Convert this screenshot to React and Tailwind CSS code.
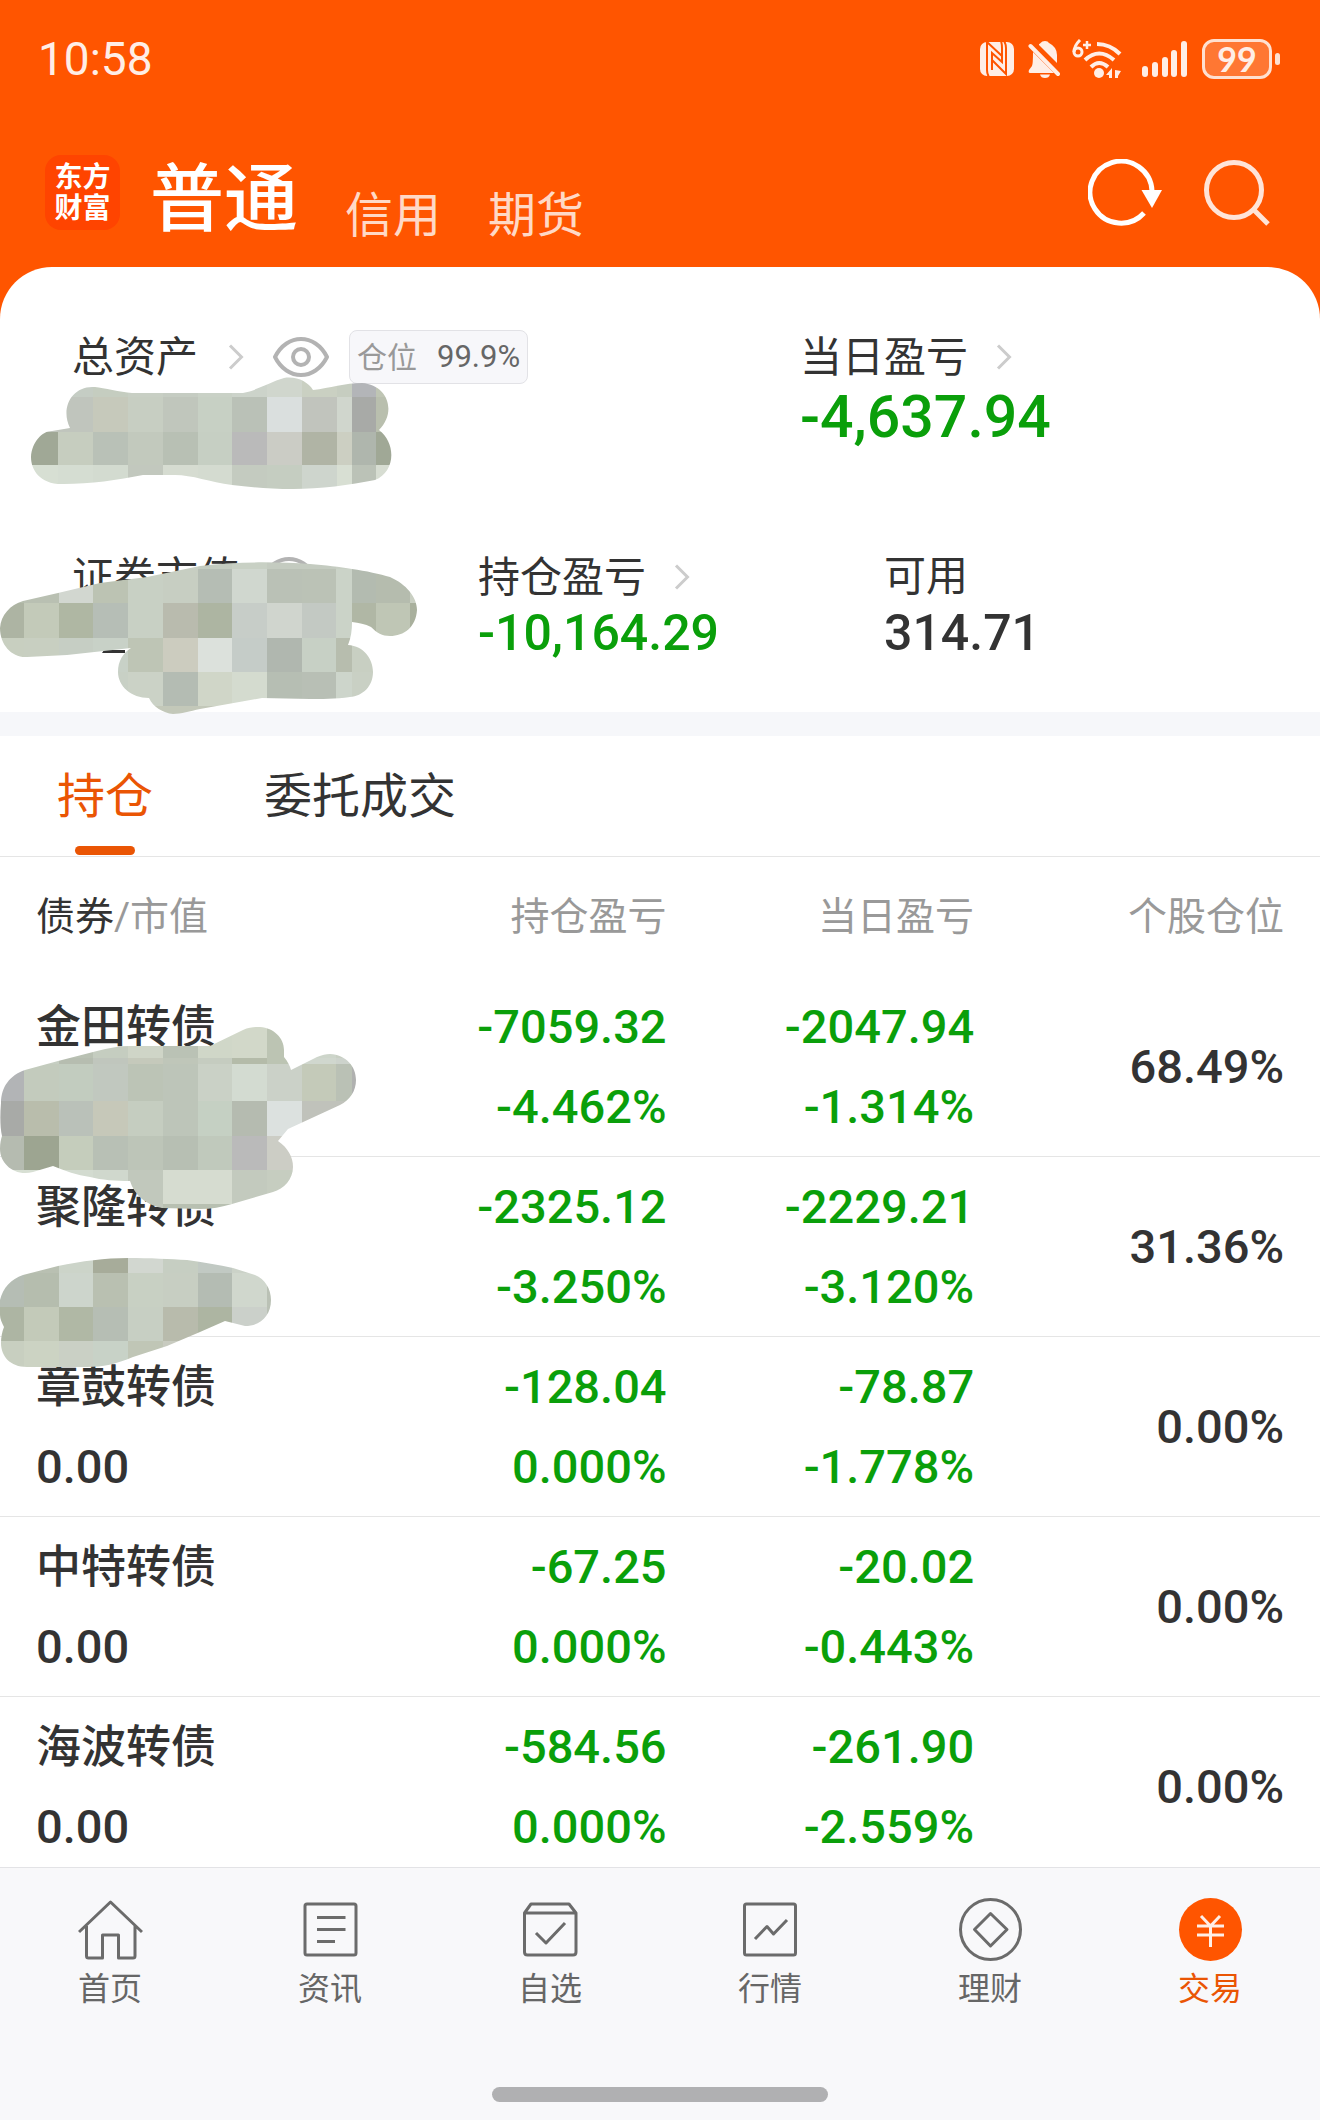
const holdings = [
  { name: "金田转债", value: "", profit: "-7059.32", profitRate: "-4.462%", today: "-2047.94", todayRate: "-1.314%", share: "68.49%" },
  { name: "聚隆转债", value: "", profit: "-2325.12", profitRate: "-3.250%", today: "-2229.21", todayRate: "-3.120%", share: "31.36%" },
  { name: "章鼓转债", value: "0.00", profit: "-128.04", profitRate: "0.000%", today: "-78.87", todayRate: "-1.778%", share: "0.00%" },
  { name: "中特转债", value: "0.00", profit: "-67.25", profitRate: "0.000%", today: "-20.02", todayRate: "-0.443%", share: "0.00%" },
  { name: "海波转债", value: "0.00", profit: "-584.56", profitRate: "0.000%", today: "-261.90", todayRate: "-2.559%", share: "0.00%" },
];

// Mosaic patches that hide private amounts. xs / ys are the cell edges,
// rows holds one colour per cell, shape is the brushed outline.
const patches = {
  assets: {
    xs: [30, 58, 93, 128, 163, 198, 232, 267, 302, 337, 352, 376, 392],
    ys: [376, 397, 432, 465, 490],
    rows: [
      "c5cdc4 c5cdc4 c5cdc0 c8cfc4 c5ccc2 c9d1c6 ccd3ca d0d6cd cad0c2 c6cdc0 b3b5b8 bfc5b4",
      "c0c5bd c0c5bd c6c9bb c7cec2 c0c6bc c7d0c4 bac1b7 dadfde c1c4bd d0d6cd a8aaa7 b9bfae",
      "a0a896 c6cdbf b9c1b7 c2c9bd b8c0b4 c6cfc3 bababa cbccc5 b0b4a5 cccfc2 afb6ad a0a896",
      "d7dfd3 d5ddd2 d3dbd0 c2c8be d6dcd1 d4dbd0 c4cbc0 c5cdc1 ced5cd d8dfd3 bbc2b7 d7ddd2",
    ],
    shape:
      "M70 428C60 408 72 385 95 387C104 388 120 392 132 393H243C258 390 270 382 284 378C297 376 308 382 313 390C330 388 345 383 362 383C388 385 397 412 379 430C397 444 395 472 375 480C350 485 320 489 293 489C270 489 250 487 232 485C210 482 192 475 175 475H143C118 480 90 484 64 484C40 485 31 470 31 457C32 442 42 431 52 431Z",
  },
  market: {
    xs: [0, 24, 59, 93, 128, 163, 198, 232, 267, 302, 336, 352, 376, 410, 418],
    ys: [562, 569, 603, 638, 672, 706, 714],
    rows: [
      "c8cfc4 c8cfc4 c8cfc4 c8cfc4 c8cfc4 c8cfc4 c4ccc0 c8d0c4 c4cbc0 c4cbc0 c8cfc4 c8cfc4 c8cfc4 c8cfc4",
      "b5bdad b9c0b2 d2d7d0 bcc3b3 c8d0c4 c7cec2 b5bdb4 d0d7cf bac1b6 bbc2b6 cbd3c8 b3bbb0 b5bcae c9cfc2",
      "adb4a3 c3cab9 afb7a3 b6beb6 c8d0c4 b9bbae adb5a2 c7cdc8 d0d5ce c3c9c3 cbd3c8 b0b7a5 bfc6b5 a9b09d",
      "c8cfc0 c8cfc1 c6cec4 c8d1c7 bec5b5 ccccbf dce1dc c5ccc8 b0b7af c7d0c5 b7bdae c8cfc2 c8cfc2 c8cfc2",
      "c8cfc0 c8cfc1 c6cec4 c8d0c5 cbd2c6 b4bcb3 d0d6c8 d4dbcf b6beb3 b8bfb5 cdd5cb c9d0c4 c9d0c4 c9d0c4",
      "c3c8b9 c3c8b9 c3c8b9 c3c8b9 c3c8b9 c3c8b9 c3c8b9 c3c8b9 c3c8b9 c3c8b9 c3c8b9 c3c8b9 c3c8b9 c3c8b9",
    ],
    // bottom edge of the hidden amount that the brush left uncovered
    residue: "M104 650H125V653H102Z",
    shape:
      "M0 628C1 615 10 605 23 601L58 593L100 583L147 577L200 566C240 561 280 562 310 564C325 565 340 567 352 569C366 571 380 574 390 577C406 584 417 597 417 610C416 627 404 636 390 636C382 636 377 633 371 627C365 624 359 623 352 622C352 630 351 638 348 645C364 646 373 659 373 672C373 686 363 696 350 697C336 699 320 699 310 699L262 698L200 709C190 711 181 714 173 714C163 713 153 707 149 698C131 698 118 686 118 672C118 661 123 653 131 648L67 655L27 657C12 658 0 645 0 628Z",
  },
  jintian: {
    xs: [0, 24, 59, 93, 128, 163, 198, 232, 267, 302, 336, 352, 358],
    ys: [1026, 1058, 1064, 1101, 1136, 1170, 1204, 1210],
    rows: [
      "b5b9b5 c8d0c4 b9c1b3 c5cdc0 cfd5c7 bac2b5 d0d7c8 d2d8c9 bcc4b3 cdd5ca c8cfc3 c8cfc3",
      "b5b9b5 c6cec2 b6bdb0 c0c6bd c5c9bb bfc6b9 c5ccc0 b4bba9 bcc4b3 d0d7ce cdd3cc cdd3cc",
      "b2b4b6 c3cbbd c2ccbf c1c8bf bcc4b6 bdc5b9 cad1c6 d3dbd1 cbd1c8 c4cab9 bac1b5 b0b1b0",
      "a8aaa7 b9bdac bac1b9 c6c8b9 c5cdc0 bdc5b9 c5d0c3 b5bbb0 dce1df c0c2bb c0c2bb c0c2bb",
      "b5bbb0 9da591 c5cdbc b8c0b5 bdc5b8 b7bfb3 c0c9bc bababa cccdc5 cccdc5 cccdc5 cccdc5",
      "d7dfd3 d7dfd3 d3dbd0 d0d8cd c1c8bc d6dcd0 d6dcd0 c3cabe c6cdc0 c6cdc0 c6cdc0 c6cdc0",
      "b8c0b1 b8c0b1 b8c0b1 b8c0b1 c1c8bc b8c0b1 b8c0b1 c3cabe c6cdc0 c6cdc0 c6cdc0 c6cdc0",
    ],
    shape:
      "M1 1103C1 1087 10 1075 25 1070L58 1061L97 1051C108 1048 119 1046 130 1046H210L243 1030C250 1027 257 1027 260 1027C274 1028 284 1038 284 1050V1057C288 1062 290 1066 291 1070L317 1057C322 1055 326 1054 330 1054C346 1055 356 1066 356 1080C356 1091 350 1100 340 1105L288 1129L278 1141C288 1148 293 1157 293 1167C293 1179 284 1189 273 1192L232 1204C222 1207 211 1209 200 1209L162 1208C145 1205 134 1194 130 1181C115 1181 102 1180 90 1177C77 1175 65 1171 53 1166L33 1172C15 1177 0 1164 0 1149C0 1143 1 1139 2 1136C0 1127 0 1115 1 1103Z",
  },
  julong: {
    xs: [0, 24, 59, 93, 128, 163, 198, 232, 267, 272],
    ys: [1257, 1273, 1307, 1341, 1368],
    rows: [
      "b5bdb4 b9c0b2 ccd4c9 a7ac9a d2d7d0 c6cec2 c1c9c3 cbd2c8 cbd2c8",
      "b5bdb4 b5bdae cdd5cc b9c0b1 c8d0c3 c7cec2 b4bcb3 d0d7cd bac1b5",
      "adb5a3 c3cab9 b0b8a5 b6beb4 c7cfc3 b8bbac adb5a2 cbd0ca bac1b5",
      "c8cfc0 ccd3c3 cad0c5 c8d2c7 c0c6b6 c8cbc0 c8cbc0 c8cbc0 c8cbc0",
    ],
    shape:
      "M0 1300C3 1288 11 1279 23 1275L58 1266C82 1261 105 1258 128 1258C150 1258 170 1259 187 1260C203 1262 219 1265 233 1268L255 1275C265 1279 271 1289 271 1300C271 1316 260 1326 245 1326L225 1321L200 1332L167 1346L133 1357C116 1364 103 1367 87 1367H27C10 1367 1 1356 1 1343C1 1337 2 1332 4 1327C2 1323 0 1319 0 1315Z",
  },
};

function Mosaic({ id, className }) {
  const { xs, ys, rows, shape, residue } = patches[id];
  const width = xs[xs.length - 1] - xs[0];
  const height = ys[ys.length - 1] - ys[0];

  return (
    <svg
      aria-hidden="true"
      className={`pointer-events-none absolute ${className}`}
      width={width}
      height={height}
      viewBox={`${xs[0]} ${ys[0]} ${width} ${height}`}
    >
      {residue && <path d={residue} fill="#333333" />}
      <clipPath id={`patch-${id}`}>
        <path d={shape} />
      </clipPath>
      <g clipPath={`url(#patch-${id})`} shapeRendering="crispEdges">
        {rows.map((row, r) =>
          row.split(" ").map((color, c) => (
            <rect
              key={`${r}-${c}`}
              x={xs[c]}
              y={ys[r]}
              width={xs[c + 1] - xs[c]}
              height={ys[r + 1] - ys[r]}
              fill={`#${color}`}
            />
          ))
        )}
      </g>
    </svg>
  );
}

function Chevron() {
  return (
    <svg width="16" height="26" viewBox="0 0 16 26" fill="none" stroke="#cccccc" strokeWidth="3">
      <path d="M2 1.5L13.5 13L2 24.5" />
    </svg>
  );
}

function Eye() {
  return (
    <svg width="56" height="40" viewBox="0 0 56 40" fill="none" stroke="#b3b3b3" strokeWidth="4">
      <path d="M2 20C8 8 18 2 28 2S48 8 54 20C48 32 38 38 28 38S8 32 2 20Z" strokeLinejoin="round" />
      <circle cx="28" cy="20" r="8" />
    </svg>
  );
}

function StatusBar() {
  return (
    <div className="flex h-[118px] items-center justify-between pl-[38px] pr-10 text-[#ffeee6]">
      <span className="text-[46px] leading-[48px]">10:58</span>
      <div className="flex items-center">
        <svg width="34" height="34" viewBox="0 0 34 34" fill="none" stroke="#ff5500" strokeWidth="2">
          <rect width="34" height="34" rx="7" fill="currentColor" stroke="none" />
          <path d="M9 35Q7 32 7 28V0L22 14" />
          <path d="M12 28V11L22 20V6Q22 2 21 -1" />
          <path d="M12 18L26 32V6Q26 2 24 -1" />
        </svg>
        <svg className="ml-3.5" width="32" height="37" viewBox="0 0 32 37" fill="currentColor">
          <path d="M11 3Q12 3 12.5 2Q14 0 17 0Q20 0 21 2Q29 6 29 14V22L11 4Z" />
          <path d="M5 11L26 32H2Q0 32 1 29L4 25Q5 23 5 11Z" />
          <path d="M12 33.5H22Q21 37 17 37Q13 37 12 33.5Z" />
          <path d="M2.5 5L30 33" fill="none" stroke="currentColor" strokeWidth="4" strokeLinecap="round" />
        </svg>
        <svg className="ml-3" width="50" height="40" viewBox="0 0 50 40" fill="none" stroke="currentColor">
          <path d="M8 1Q2 7 2 13" strokeWidth="3" />
          <circle cx="6" cy="13" r="4" strokeWidth="3" />
          <path d="M11 6H19M15 2V10" strokeWidth="2.5" />
          <path d="M25 5Q38 5 48 15" strokeWidth="4" />
          <path d="M13 21Q27 8 42 21" strokeWidth="4" />
          <path d="M19 28Q27 20 36 28" strokeWidth="4" />
          <circle cx="27" cy="34" r="5" fill="currentColor" stroke="none" />
          <path d="M40 29V39H37V36H34ZM43 31L49 32L46 37V39H43Z" fill="currentColor" stroke="none" />
        </svg>
        <svg className="ml-5" width="46" height="36" viewBox="0 0 46 36" fill="currentColor">
          <rect x="0" y="25" width="6" height="11" rx="3" />
          <rect x="10" y="21" width="6" height="15" rx="3" />
          <rect x="20" y="16" width="6" height="20" rx="3" />
          <rect x="29" y="9" width="6" height="27" rx="3" />
          <rect x="39" y="0" width="6" height="36" rx="3" />
        </svg>
        <span className="ml-3.5 flex h-10 w-[70px] items-center justify-center rounded-xl border-[3px] border-[#ffe0d0] bg-[#ff7733] font-['Lato','Noto_Sans',sans-serif] text-[34px] font-bold leading-[34px]">
          99
        </span>
        <span className="ml-[3px] h-3 w-[5px] rounded-sm bg-[#ffe0d0]" />
      </div>
    </div>
  );
}

function Header() {
  return (
    <header>
      <StatusBar />
      <div className="flex h-[149px] items-center pl-[45px] pr-[50px]">
        <div className="flex h-[75px] w-[75px] flex-col items-center justify-center rounded-2xl bg-[#ff4400] text-[28px] font-bold leading-[31px] text-white">
          <span>东方</span>
          <span>财富</span>
        </div>
        <nav className="ml-[30px] flex items-end gap-[47px] self-end pb-[27px] text-[48px] leading-[48px] text-[#ffd9c6]">
          <button className="text-[74px] font-medium leading-[80px] text-white">普通</button>
          <button>信用</button>
          <button>期货</button>
        </nav>
        <div className="ml-auto flex items-center gap-[42px]">
          <button aria-label="刷新">
            <svg width="74" height="68" viewBox="0 0 74 68" fill="none" stroke="#ffffff" strokeWidth="5">
              <path d="M64 32A31 31 0 1 0 56 54" />
              <path d="M53.5 31H74L64 49Z" fill="#ffffff" stroke="none" />
            </svg>
          </button>
          <button aria-label="搜索">
            <svg width="66" height="68" viewBox="0 0 66 68" fill="none" stroke="#ffe4d8" strokeWidth="5">
              <circle cx="30" cy="31" r="27.5" />
              <path d="M49 50L64 65" />
            </svg>
          </button>
        </div>
      </div>
    </header>
  );
}

function Summary() {
  return (
    <section className="relative rounded-t-[52px] bg-white pb-[50px] pl-[72px] pr-[30px] pt-[63px] text-[42px] text-[#333333]">
      <div className="grid grid-cols-[728fr_490fr]">
        <div className="flex h-[54px] items-center">
          <span>总资产</span>
          <span className="ml-[30px]">
            <Chevron />
          </span>
          <span className="ml-[29px]">
            <Eye />
          </span>
          <span className="ml-5 flex h-[54px] items-center gap-5 rounded-lg border border-[#e2e2e6] bg-[#f7f7fa] px-[7px] text-[30px] text-[#999999]">
            仓位 <span className="text-[31px] text-[#666666]">99.9%</span>
          </span>
        </div>
        <div>
          <div className="flex h-[54px] items-center gap-7">
            当日盈亏 <Chevron />
          </div>
          <p className="text-[59px] font-medium leading-[66px] text-[#0a9f0a]">-4,637.94</p>
        </div>
      </div>
      <div className="mt-[100px] grid grid-cols-3">
        <div className="flex h-[54px] items-center gap-[21px]">
          证券市值 <Eye />
        </div>
        <div>
          <div className="flex h-[54px] items-center gap-7">
            持仓盈亏 <Chevron />
          </div>
          <p className="text-[50px] font-medium leading-[58px] text-[#0a9f0a]">-10,164.29</p>
        </div>
        <div>
          <p className="leading-[54px]">可用</p>
          <p className="text-[50px] font-medium leading-[58px]">314.71</p>
        </div>
      </div>
      <Mosaic id="assets" className="left-[30px] top-[109px]" />
      <Mosaic id="market" className="left-0 top-[295px]" />
    </section>
  );
}

function Holdings() {
  return (
    <section className="relative min-h-0 flex-1 overflow-hidden bg-white">
      <div className="flex gap-[111px] border-b border-[#e5e5e5] pl-[57px] text-[48px] text-[#333333]">
        <button className="relative h-[120px] pt-0.5 text-[#ea5504]">
          持仓
          <span className="absolute bottom-px left-1/2 h-[9px] w-[60px] -translate-x-1/2 rounded-full bg-[#ea5504]" />
        </button>
        <button className="h-[120px] pt-0.5">委托成交</button>
      </div>
      <table className="w-full table-fixed text-right">
        <thead>
          <tr className="h-[119px] text-[39px] text-[#999999]">
            <th className="w-[26%] pl-9 pt-0.5 text-left font-normal">
              <span className="text-[#333333]">债券</span>/市值
            </th>
            <th className="w-[24.5%] pt-0.5 font-normal">持仓盈亏</th>
            <th className="w-[23.3%] pt-0.5 font-normal">当日盈亏</th>
            <th className="pr-9 pt-0.5 font-normal">个股仓位</th>
          </tr>
        </thead>
        <tbody>
          {holdings.map((item) => (
            <tr
              key={item.name}
              className="h-[180px] border-b border-[#e5e5e5] text-[47px] font-medium leading-[80px] text-[#0a9f0a]"
            >
              <td className="pl-9 pt-0.5 text-left text-[#333333]">
                <p className="h-20 text-[45px] leading-[82px]">{item.name}</p>
                <p className="h-20">{item.value}</p>
              </td>
              <td className="pt-0.5">
                <p>{item.profit}</p>
                <p>{item.profitRate}</p>
              </td>
              <td className="pt-0.5">
                <p>{item.today}</p>
                <p>{item.todayRate}</p>
              </td>
              <td className="pr-9 pt-0.5 text-[#333333]">{item.share}</td>
            </tr>
          ))}
        </tbody>
      </table>
      <Mosaic id="jintian" className="left-0 top-[290px]" />
      <Mosaic id="julong" className="left-0 top-[521px]" />
    </section>
  );
}

const tabs = [
  {
    label: "首页",
    icon: <path d="M1 34L32.5 4L64 34M8.5 28V58Q8.5 60 10.5 60H24.5V37H40.5V60H55Q57 60 57 58V28" />,
  },
  {
    label: "资讯",
    icon: (
      <>
        <rect x="7" y="6" width="51" height="51" rx="2" />
        <path d="M19 19.5H47.5M19 31.5H47.5M19 43.5H37" />
      </>
    ),
  },
  {
    label: "自选",
    icon: (
      <>
        <path d="M6.5 15L13 6H51L58 15V54Q58 57 55 57H9.5Q6.5 57 6.5 54ZM6.5 15H58" />
        <path d="M18 35L28 45L47 25" />
      </>
    ),
  },
  {
    label: "行情",
    icon: (
      <>
        <rect x="6.5" y="6" width="51" height="51" rx="2" />
        <path d="M17 41L29 28.5L35.5 36L49 22" />
      </>
    ),
  },
  {
    label: "理财",
    icon: (
      <>
        <circle cx="32.5" cy="31.5" r="30" />
        <path d="M32.5 15.5L49 31.5L32.5 48L16.5 31.5Z" />
      </>
    ),
  },
  {
    label: "交易",
    active: true,
    icon: (
      <>
        <circle cx="32.5" cy="31.5" r="31.5" fill="#ff5500" stroke="none" />
        <path d="M23 18L32.5 28L42 18M19 28H46M19 37H46M32.5 28V49" stroke="#ffeee6" />
      </>
    ),
  },
];

function TabBar() {
  return (
    <nav className="border-t border-[#e3e3e6] bg-[#f8f8fa] pb-[18px] pt-[30px]">
      <div className="grid grid-cols-6">
        {tabs.map((tab) => (
          <button
            key={tab.label}
            className={`flex flex-col items-center gap-[7px] text-[32px] leading-10 ${
              tab.active ? "text-[#ea5504]" : "text-[#666666]"
            }`}
          >
            <svg
              width="65"
              height="64"
              viewBox="0 0 65 64"
              fill="none"
              stroke="#6b6b6b"
              strokeWidth="3"
              strokeLinejoin="round"
            >
              {tab.icon}
            </svg>
            {tab.label}
          </button>
        ))}
      </div>
      <div className="mx-auto mt-[78px] h-[15px] w-[336px] rounded-full bg-[#b0b0b2]" />
    </nav>
  );
}

export default function App() {
  return (
    <div
      lang="zh-CN"
      className="flex h-screen flex-col overflow-hidden bg-[#ff5500] font-['Roboto','Noto_Sans_CJK_SC',sans-serif]"
    >
      <Header />
      <Summary />
      <div className="h-6 bg-[#f6f7fa]" />
      <Holdings />
      <TabBar />
    </div>
  );
}
